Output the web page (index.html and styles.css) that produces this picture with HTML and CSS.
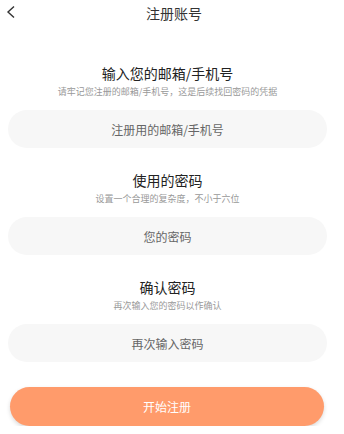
FILE: index.html
```html
<!DOCTYPE html>
<html lang="zh-CN">
<head>
    <meta charset="UTF-8">
    <meta name="viewport" content="width=device-width, initial-scale=1.0">
    <title>注册账号</title>
    <link rel="stylesheet" href="styles.css">
</head>
<body>

<header class="topbar">
    <a class="back" href="#">
        <svg width="10" height="14" viewBox="0 0 10 14">
            <polyline points="8,1.5 2,7 8,12.5" fill="none" stroke="#333" stroke-width="1.4" />
        </svg>
    </a>
    <div class="topbar-title">注册账号</div>
</header>

<form class="form">
    <div class="field">
        <div class="field-title">输入您的邮箱/手机号</div>
        <div class="field-tip">请牢记您注册的邮箱/手机号，这是后续找回密码的凭据</div>
        <input class="field-input" type="text" placeholder="注册用的邮箱/手机号">
    </div>
    <div class="field">
        <div class="field-title">使用的密码</div>
        <div class="field-tip">设置一个合理的复杂度，不小于六位</div>
        <input class="field-input" type="password" placeholder="您的密码">
    </div>
    <div class="field">
        <div class="field-title">确认密码</div>
        <div class="field-tip">再次输入您的密码以作确认</div>
        <input class="field-input" type="password" placeholder="再次输入密码">
    </div>
    <button class="submit" type="button">开始注册</button>
</form>

</body>
</html>
```

FILE: styles.css
```css
body {
    margin: 0;
    padding: 0;
    background: #fff;
    font-family: "Noto Sans CJK SC", "Noto Sans", sans-serif;
    color: #333;
}
.topbar {
    position: relative;
    height: 26px;
    display: flex;
    align-items: center;
    justify-content: center;
    padding-left: 4px;
}
.back {
    position: absolute;
    left: 6px;
    top: 5px;
    display: block;
    line-height: 0;
}
.topbar-title {
    font-size: 14px;
    line-height: 26px;
    color: #333;
}
.form {
    display: flex;
    flex-direction: column;
    padding: 37px 17px 0 8px;
}
.field {
    display: flex;
    flex-direction: column;
    align-items: center;
    margin-bottom: 22px;
}
.field-title {
    font-size: 14px;
    line-height: 20px;
    color: #222;
}
.field-tip {
    font-size: 9px;
    line-height: 12px;
    margin-top: 3px;
    color: #999;
}
.field-input {
    box-sizing: border-box;
    width: 100%;
    height: 38px;
    margin-top: 12px;
    border: none;
    border-radius: 19px;
    background: #f7f7f7;
    font-family: inherit;
    font-size: 12px;
    text-align: center;
    outline: none;
}
.field-input::placeholder {
    color: #666;
}
.submit {
    margin: 3px 3px 0 2px;
    height: 39px;
    border: none;
    border-radius: 20px;
    background: #ff9b6b;
    color: #fff;
    font-family: inherit;
    font-size: 12px;
    box-shadow: 0 2px 4px rgba(0, 0, 0, 0.15);
}
```
